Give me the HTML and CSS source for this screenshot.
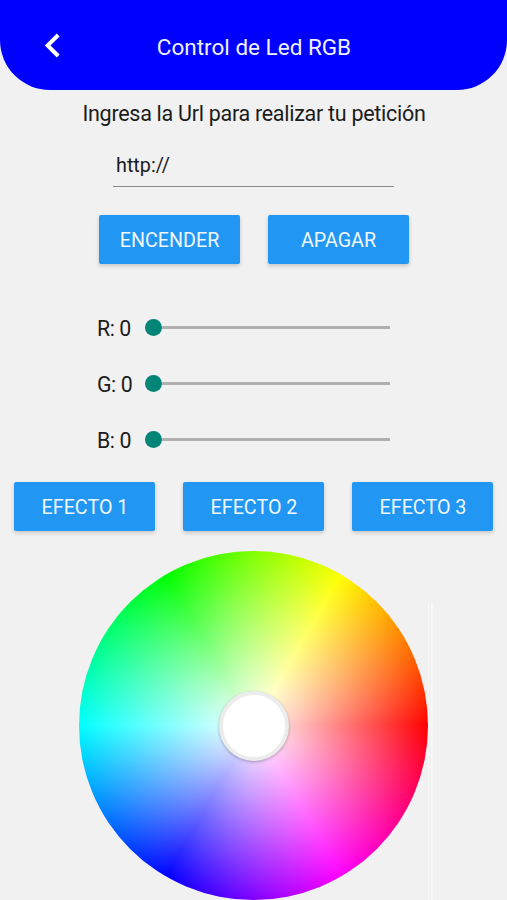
FILE: index.html
```
<!DOCTYPE html>
<html lang="es">
<head>
    <meta charset="UTF-8">
    <title>Control de Led RGB</title>
    <link rel="stylesheet" href="styles.css">
</head>
<body>
<div class="header">
    <svg class="back" width="16" height="25" viewBox="0 0 16 25">
        <path d="M14.2 2 L3.6 12.5 L14.2 23" fill="none" stroke="#fff" stroke-width="4"/>
    </svg>
    <h1>Control de Led RGB</h1>
</div>
<div class="content">
    <p class="label">Ingresa la Url para realizar tu petición</p>
    <div class="url">http://</div>
    <div class="buttons power">
        <div class="btn"><span>ENCENDER</span></div>
        <div class="btn"><span>APAGAR</span></div>
    </div>
    <ul class="sliders">
        <li><span class="name">R: 0</span><div class="slider"><i class="thumb"></i><i class="track"></i></div></li>
        <li><span class="name">G: 0</span><div class="slider"><i class="thumb"></i><i class="track"></i></div></li>
        <li><span class="name">B: 0</span><div class="slider"><i class="thumb"></i><i class="track"></i></div></li>
    </ul>
    <div class="buttons effects">
        <div class="btn"><span>EFECTO 1</span></div>
        <div class="btn"><span>EFECTO 2</span></div>
        <div class="btn"><span>EFECTO 3</span></div>
    </div>
    <div class="picker">
        <div class="wheel"><div class="knob"></div></div>
        <div class="bar"></div>
    </div>
</div>
</body>
</html>
```
FILE: styles.css
```
* {
    padding: 0;
    margin: 0;
    list-style: none;
    box-sizing: border-box;
}

body {
    width: 507px;
    height: 900px;
    overflow: hidden;
    background: #f1f1f1;
    color: #1c1c1c;
    font-family: Roboto, "Liberation Sans", sans-serif;
}

.header {
    display: grid;
    grid-template-columns: 64px 1fr 64px;
    align-items: center;
    height: 90px;
    border-radius: 0 0 50px 50px;
    background: #0000ff;
}

.back {
    margin-left: 44px;
}

.header h1 {
    padding-top: 3px;
    padding-left: 1px;
    font-size: 22.5px;
    font-weight: normal;
    line-height: 26px;
    text-align: center;
    color: #f0f0ff;
}

.content {
    display: flex;
    flex-direction: column;
    align-items: center;
}

.label {
    margin-top: 10px;
    padding-left: 1px;
    font-size: 21.5px;
    line-height: 27px;
    letter-spacing: -0.28px;
    white-space: nowrap;
}

.url {
    width: 281px;
    height: 38px;
    margin-top: 22px;
    padding-left: 3px;
    border-bottom: 1.5px solid #8a8a8a;
    font-size: 19.8px;
    line-height: 33px;
}

.buttons {
    display: flex;
    gap: 28px;
}

.btn {
    width: 141px;
    height: 49px;
    padding-left: 1px;
    border-radius: 2px;
    background: #2196f3;
    box-shadow: 0 2px 4px rgba(0, 0, 0, 0.18);
    font-size: 19.7px;
    line-height: 52px;
    text-align: center;
    white-space: nowrap;
    color: #f0f8ff;
}

.power {
    margin-top: 28px;
}

.sliders {
    width: 293px;
    margin-top: 35px;
    margin-right: 20px;
}

.sliders li {
    display: flex;
    align-items: center;
    height: 56px;
}

.name {
    width: 48px;
    padding-top: 3px;
    font-size: 21.3px;
    line-height: 26px;
    letter-spacing: -0.4px;
}

.slider {
    display: flex;
    align-items: center;
    flex: 1;
}

.thumb {
    width: 17px;
    height: 17px;
    border-radius: 50%;
    background: #008577;
}

.track {
    flex: 1;
    height: 3px;
    background: #b0b0b0;
}

.effects {
    margin-top: 15px;
}

.picker {
    display: flex;
    align-items: flex-end;
    margin-top: 20px;
    margin-left: 5px;
}

.wheel {
    display: flex;
    align-items: center;
    justify-content: center;
    width: 349px;
    height: 349px;
    border-radius: 50%;
    background:
        radial-gradient(closest-side, #fff, rgba(255, 255, 255, 0)),
        conic-gradient(#80ff00 0deg, #ff0 30deg, #f00 90deg, #f0f 150deg, #00f 210deg, #0ff 270deg, #0f0 330deg, #80ff00 360deg);
}

.knob {
    width: 70px;
    height: 70px;
    border: 4px solid #ececec;
    border-radius: 50%;
    background: #fff;
    box-shadow: 0 1px 3px rgba(0, 0, 0, 0.3);
}

.bar {
    width: 5px;
    height: 297px;
    border: solid #f8f8f8;
    border-width: 0 2px 0 1px;
}
```
